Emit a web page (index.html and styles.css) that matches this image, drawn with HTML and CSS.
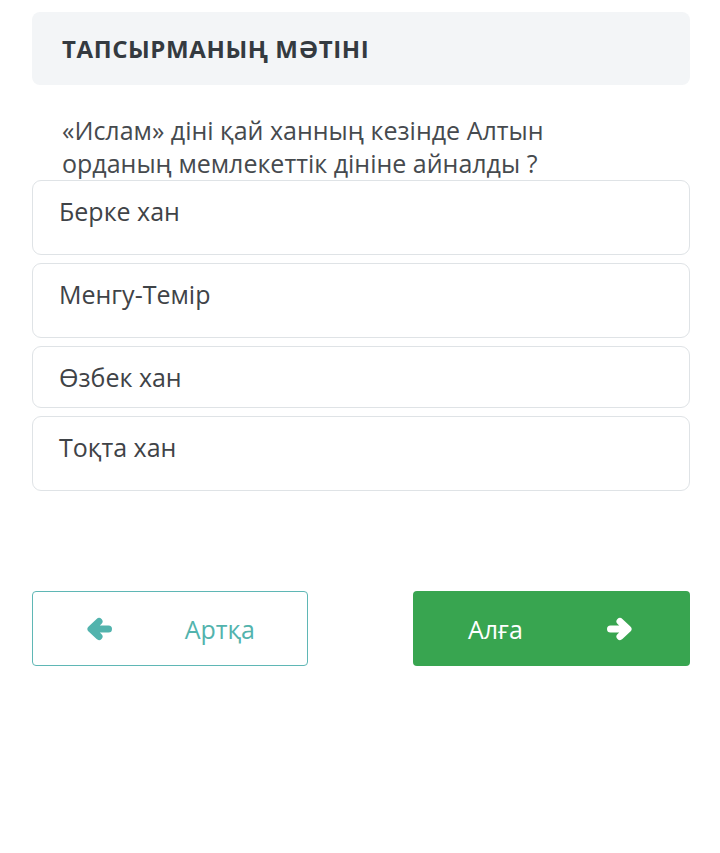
FILE: index.html
```html
<!DOCTYPE html>
<html lang="kk">
<head>
  <meta charset="UTF-8" />
  <meta name="viewport" content="width=device-width, initial-scale=1.0"/>
  <title>Тапсырма</title>
  <link rel="stylesheet" href="styles.css">
</head>
<body>
  <div class="task">
    <div class="task-header">ТАПСЫРМАНЫҢ МӘТІНІ</div>

    <p class="question">«Ислам» діні қай ханның кезінде Алтын орданың мемлекеттік дініне айналды ?</p>

    <div class="answers">
      <div class="answer">Берке хан</div>
      <div class="answer">Менгу-Темір</div>
      <div class="answer answer-short">Өзбек хан</div>
      <div class="answer">Тоқта хан</div>
    </div>

    <div class="nav">
      <a href="#" class="btn btn-back">
        <svg class="arrow" viewBox="0 0 26 24" fill="none" stroke="currentColor" stroke-width="7" stroke-linecap="round" stroke-linejoin="round">
          <path d="M22.5 12H6M13 4.5L5 12l8 7.5"/>
        </svg>
        <span>Артқа</span>
      </a>
      <a href="#" class="btn btn-next">
        <span>Алға</span>
        <svg class="arrow" viewBox="0 0 26 24" fill="none" stroke="currentColor" stroke-width="7" stroke-linecap="round" stroke-linejoin="round">
          <path d="M3.5 12H20M13 4.5l8 7.5-8 7.5"/>
        </svg>
      </a>
    </div>
  </div>
</body>
</html>
```

FILE: styles.css
```css
body {
  margin: 0;
  padding: 0;
  background: #fff;
  font-family: 'Open Sans', 'Noto Sans', sans-serif;
  color: #3f4347;
}

.task {
  padding: 12px 30px 0 32px;
}

.task-header {
  height: 73px;
  display: flex;
  align-items: center;
  padding: 0 30px;
  background: #f3f5f7;
  border-radius: 8px;
  font-size: 24px;
  font-weight: 700;
  letter-spacing: 0.6px;
  color: #343a40;
}

.question {
  margin: 29px 0 0;
  padding: 0 90px 0 30px;
  font-size: 25px;
  line-height: 33px;
  color: #464a4e;
}

.answers {
  display: flex;
  flex-direction: column;
  gap: 8px;
}

.answer {
  padding: 14px 26px 26px;
  border: 1px solid #dfe3e6;
  border-radius: 9px;
  font-size: 25px;
  line-height: 33px;
  color: #3f4347;
}

.answer-short {
  padding-bottom: 13px;
}

.nav {
  display: flex;
  justify-content: space-between;
  margin-top: 100px;
}

.btn {
  width: 276px;
  height: 75px;
  box-sizing: border-box;
  display: flex;
  align-items: center;
  justify-content: space-between;
  padding: 0 52px 0 53px;
  border-radius: 4px;
  font-size: 25px;
  text-decoration: none;
}

.btn-back {
  border: 1px solid #5fb7b5;
  color: #52b3ad;
}

.btn-next {
  width: 277px;
  padding: 0 57px 0 55px;
  background: #38a550;
  color: #fff;
}

.arrow {
  width: 26px;
  height: 24px;
}
```
